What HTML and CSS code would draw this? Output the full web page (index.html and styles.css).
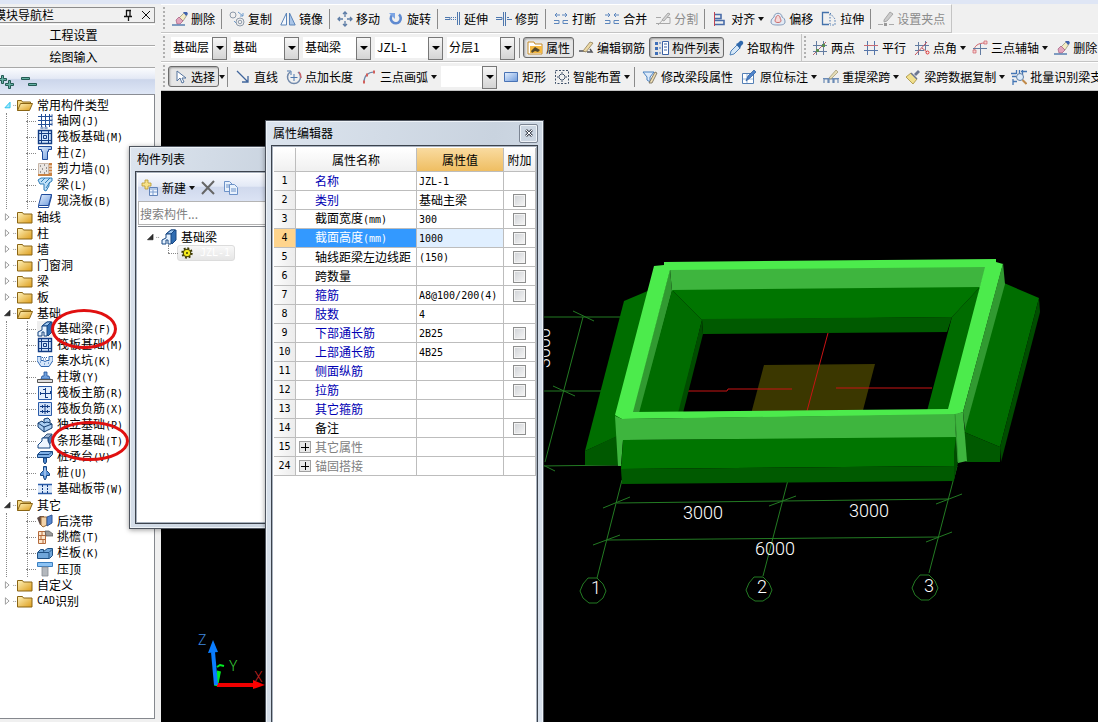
FILE: index.html
```html
<!doctype html>
<html lang="zh-CN">
    <head>
        <meta charset="UTF-8" />
        <meta name="viewport" content="width=device-width, initial-scale=1.0" />
        <title>绘图输入</title>
        <link rel="stylesheet" href="styles.css">
    </head>
    <body>
        <!-- Icon set -->
        <svg class="sprite" aria-hidden="true">
            <defs>
                <linearGradient id="gold" x1="0" y1="0" x2="1" y2="1">
                    <stop offset="0" stop-color="#fff3bd" />
                    <stop offset="1" stop-color="#dd9d1b" />
                </linearGradient>
                <linearGradient id="blue" x1="0" y1="0" x2="1" y2="1">
                    <stop offset="0" stop-color="#e6f1ff" />
                    <stop offset="1" stop-color="#6f9bdc" />
                </linearGradient>
            </defs>

            <!-- toolbar -->
            <symbol id="i-erase" viewBox="0 0 16 16">
                <path d="M7 7l5-5 3 2-4 6z" fill="#f3ecc4" stroke="#8c8a70" stroke-width=".7" />
                <path d="M11 1h4l1 2-2 2z" fill="#3f62ad" />
                <path d="M4 9l3-3 4 4-3 3H5z" fill="#e3a6bd" stroke="#a25a7e" stroke-width=".7" />
                <path d="M0 14h13" stroke="#587fb0" stroke-width="1.5" />
            </symbol>
            <symbol id="i-copy" viewBox="0 0 16 16" fill="none" stroke="#8e9aa9">
                <circle cx="4" cy="4" r="3" />
                <circle cx="11" cy="11" r="4" />
                <circle cx="11" cy="11" r="1.8" />
                <path d="M9 1l5 4m0-3v3h-3" stroke="#6f9ccd" />
                <path d="M5 10l2 2" stroke="#6f9ccd" />
            </symbol>
            <symbol id="i-mirror" viewBox="0 0 16 16" stroke="#5b84b8">
                <path d="M6.500 2v12H.8z" fill="#f4f8fd" />
                <path d="M9.500 2v12h5.700z" fill="#a9c5e8" />
            </symbol>
            <symbol id="i-move" viewBox="0 0 16 16" fill="none" stroke="#5e7da6" stroke-width="1.300">
                <path d="M8 1v5M8 10v5M1 8h5M10 8h5M6 3l2-2 2 2M6 13l2 2 2-2M3 6L1 8l2 2M13 6l2 2-2 2" />
            </symbol>
            <symbol id="i-rotate" viewBox="0 0 16 16">
                <path d="M4 4a5 5 0 1 0 7-.5" fill="none" stroke="#5f8ad0" stroke-width="2.600" />
                <path d="M1 2h6v6z" fill="#7da5e4" />
            </symbol>
            <symbol id="i-extend" viewBox="0 0 16 16" fill="none" stroke="#4f78ae">
                <path d="M0 6.500h5v2H0" />
                <path d="M6 6.500h5M6 8.500h5" stroke-dasharray="1 1" />
                <path d="M12.500 1v13M14.500 1v13" />
            </symbol>
            <symbol id="i-trim" viewBox="0 0 16 16" fill="none" stroke="#4f78ae">
                <path d="M0 6.500h6v2H0M7.500 1v14M9.500 1v14M11 6.500h2M11 8.500h5" />
            </symbol>
            <symbol id="i-break" viewBox="0 0 16 16" fill="none" stroke="#5c86bd">
                <path d="M7 4H2m2-2L2 4l2 2M9 4h5m-2-2l2 2-2 2" />
                <path d="M1 9.500h5v3H1M15 9.500h-5v3h5" />
            </symbol>
            <symbol id="i-merge" viewBox="0 0 16 16" fill="none" stroke="#5c86bd">
                <path d="M1 4h5M4 2l2 2-2 2M15 4h-5m2-2l-2 2 2 2" />
                <path d="M1 9.500h5v3H1M15 9.500h-5v3h5" />
            </symbol>
            <symbol id="i-split" viewBox="0 0 16 16" fill="none" stroke="#a8a8a8">
                <path d="M1 6.500h5M1 12.500h14v-6h-3M3 14L14 2" />
                <path d="M7 9l6-7 2 1-6 7z" fill="#d4d4d4" />
            </symbol>
            <symbol id="i-align" viewBox="0 0 16 16" fill="none">
                <path d="M2.500 1v14" stroke="#c04454" />
                <path d="M3 3.500h6v4H3M3 9.500h9v4H3" stroke="#4a6da9" stroke-width="1.600" />
            </symbol>
            <symbol id="i-offset" viewBox="0 0 16 16">
                <path d="M1 11c0-3 2-4 3-5 0-5 8-5 8 0 2 1 3 2 3 5 0 3-4 3-7 3s-7 0-7-3z" fill="#e3ebf5" stroke="#8098b8" />
                <path d="M5 10c0-2 1-2 1-4 1-2 3-2 4 0 0 2 1 2 1 4s-6 2-6 0z" fill="#f7d9d9" stroke="#ca6e6e" />
            </symbol>
            <symbol id="i-stretch" viewBox="0 0 16 16" fill="none" stroke="#4472ab">
                <path d="M8 1.500H1.500v12H8" stroke-width="1.300" />
                <path d="M9 2l5 6v6H9M9 3v10" stroke-dasharray="1.500 1.500" />
            </symbol>
            <symbol id="i-grip" viewBox="0 0 16 16">
                <path d="M6 9l6-8 3 2-6 7-3 1z" fill="#ccc" stroke="#999" stroke-width=".8" />
                <path d="M0 13.500h5M11 13.500h5" stroke="#aaa" />
                <path d="M6 12h3v3H6z" fill="#999" />
            </symbol>
            <symbol id="i-props" viewBox="0 0 16 16">
                <path d="M1 2h6l1 2h7v10H1z" fill="#fff" stroke="#c58c2a" />
                <path d="M3 6h12v7H3z" fill="#f4b842" />
                <path d="M4 11l4-4 5 3-2 2-3-1-3 2z" fill="#554a2d" />
            </symbol>
            <symbol id="i-editbar" viewBox="0 0 16 16">
                <path d="M1 11h7M9 12h5l-2-3" fill="none" stroke="#50535a" stroke-width="1.500" />
                <path d="M5 11l7-9 3 1-7 9z" fill="#ecd9a5" stroke="#927f59" stroke-width=".8" />
            </symbol>
            <symbol id="i-list" viewBox="0 0 16 16">
                <path d="M2 2h3v3H2zM2 7h3v3H2zM2 12h3v3H2z" fill="#3f6fb8" />
                <path d="M6 3h2M6 8h2M6 13h2" stroke="#3f6fb8" />
                <path d="M9.500 1.500h6v13h-6z" fill="#fff" stroke="#3d63a5" />
                <path d="M11 4h3M11 7h3M11 10h3" stroke="#3d63a5" />
            </symbol>
            <symbol id="i-pick" viewBox="0 0 16 16">
                <path d="M2 15l1-4 6-6 3 3-6 6z" fill="#d6e8f8" stroke="#5283b9" />
                <path d="M8 4l2-1 2-2c2-1 4 1 3 3l-2 2-1 3z" fill="#3069ac" />
            </symbol>
            <symbol id="i-twopt" viewBox="0 0 16 16" fill="none">
                <path d="M4.500 1v14M11.500 1v14M1 5.500h14M1 11.500h14" stroke="#637ca1" />
                <path d="M1 15L14 2" stroke="#b0666b" />
                <path d="M10 4h3v3h-3zM4 9h3v3H4z" fill="#5a8d50" />
            </symbol>
            <symbol id="i-parallel" viewBox="0 0 16 16" fill="none">
                <path d="M4.500 1v14M11.500 1v14" stroke="#5676aa" />
                <path d="M1 5.500h14" stroke="#c96c75" />
                <path d="M1 10.500h14" stroke="#5676aa" />
            </symbol>
            <symbol id="i-angle" viewBox="0 0 16 16" fill="none">
                <path d="M4.500 2v13M11.500 1v9M1 5.500h14M1 10.500h9" stroke="#637ca1" />
                <path d="M1 15L13 2M8 8l5 4" stroke="#c7525c" />
                <circle cx="13.500" cy="12.500" r="1.500" stroke="#d33" />
            </symbol>
            <symbol id="i-3axis" viewBox="0 0 16 16" fill="none">
                <path d="M2 11C2 6 6 3 13 3" stroke="#cf6068" />
                <path d="M1 8.500h14M8.500 4v11" stroke="#637ca1" />
                <path d="M12 1h3v3h-3zM1 10h3v3H1z" fill="#f5d0d0" stroke="#cf6068" stroke-width=".7" />
            </symbol>
            <symbol id="i-arrow" viewBox="0 0 16 16">
                <path d="M5 2v10l3-3 2 5 2-1-2-4h4z" fill="#fff" stroke="#54749f" />
            </symbol>
            <symbol id="i-line" viewBox="0 0 16 16">
                <path d="M2 2l11 11m0-6v6H7" fill="none" stroke="#40659c" stroke-width="1.300" />
            </symbol>
            <symbol id="i-ptlen" viewBox="0 0 16 16" fill="none">
                <path d="M4 3a6.500 6.500 0 1 0 8 0" stroke="#7088aa" stroke-width="1.500" />
                <path d="M1 2h4v4" stroke="#4f78ae" />
                <path d="M8 5v7M4.500 8.500h7" stroke="#4f78ae" />
                <path d="M13 3c2 2 2 4 2 6" stroke="#c9646b" stroke-width="1.500" />
            </symbol>
            <symbol id="i-arc" viewBox="0 0 16 16" fill="none">
                <path d="M3 13C3 7 7 3 13 3" stroke="#6c86a8" stroke-width="1.200" />
                <path d="M2 13h2M5 6h2M12 3h2" stroke="#d2605c" stroke-width="3" />
            </symbol>
            <symbol id="i-rect" viewBox="0 0 16 16">
                <path d="M1.500 3.500h13v9h-13z" fill="url(#blue)" stroke="#4973b5" />
            </symbol>
            <symbol id="i-smart" viewBox="0 0 16 16" fill="none" stroke="#3d4f68">
                <path d="M1.500 1.500h13v13h-13z" stroke-dasharray="2 1.500" />
                <path d="M8 3v3M8 10v3M3 8h3M10 8h3" />
                <path d="M6 5.500h4M6 10.500h4M5.500 6v4M10.500 6v4" stroke-dasharray="1 2" />
            </symbol>
            <symbol id="i-modify" viewBox="0 0 16 16">
                <path d="M1 3h11L8 8v5l-3-2V8z" fill="#dceafa" stroke="#4981c0" />
                <path d="M7 14l6-11 2 1-5 10z" fill="#f0dfb4" stroke="#6d6554" stroke-width=".8" />
            </symbol>
            <symbol id="i-note" viewBox="0 0 16 16">
                <path d="M1.500 4.500h11v10h-11z" fill="#fff" stroke="#5580b6" />
                <path d="M2 10h10M6 5v9" stroke="#9bb8dc" />
                <path d="M5 12l2-5 6-6 2 2-6 6z" fill="#4e83cb" stroke="#2a5b9d" stroke-width=".7" />
            </symbol>
            <symbol id="i-span" viewBox="0 0 16 16">
                <path d="M1 14v-4h4v4M6 14v-4h4v4M11 14v-4h4v4M0 9.500h16" fill="none" stroke="#6b8bb5" stroke-width="1.200" />
                <path d="M6 9l7-8 2 2-7 7z" fill="#e5dcb6" stroke="#9b936d" stroke-width=".7" />
            </symbol>
            <symbol id="i-brush" viewBox="0 0 16 16">
                <path d="M9 5l4-4 2 2-4 4z" fill="#6c7690" />
                <path d="M6 4l6 6-4 5-7-7z" fill="#f1df8d" stroke="#a48e3a" stroke-width=".8" />
                <path d="M6 4l6 6" stroke="#6c7690" stroke-width="1.500" />
            </symbol>
            <symbol id="i-batch" viewBox="0 0 16 16" fill="none">
                <path d="M0 4.500h5M1 7.500h4M2 12.500h4M5.500 1v4M8.500 1v4M11.500 1v5M10 2.500h6M2 10v6" stroke="#4476b5" stroke-width="1.300" />
                <circle cx="9" cy="8" r="3.500" fill="#dcebfa" stroke="#5d7ea6" />
                <path d="M11.500 11l4 4" stroke="#c08a4a" stroke-width="2" />
            </symbol>

            <!-- tree -->
            <symbol id="i-folder" viewBox="0 0 16 16">
                <path d="M.5 3.500h5l1 1.500h8.500v9H.5z" fill="url(#gold)" stroke="#8a6514" />
            </symbol>
            <symbol id="i-folder-open" viewBox="0 0 16 16">
                <path d="M.5 13.500v-10h4l1 1.500h8v3" fill="#f5d884" stroke="#8a6514" />
                <path d="M.5 13.500l3-7h12l-3 7z" fill="url(#gold)" stroke="#8a6514" />
            </symbol>
            <symbol id="i-open" viewBox="0 0 14 16">
                <path d="M6.500 5v6H.5z" fill="#333" stroke="#111" stroke-width=".6" />
                <path d="M10 8.500h4" stroke="#888" stroke-dasharray="1 1" />
            </symbol>
            <symbol id="i-open-hot" viewBox="0 0 14 16">
                <path d="M6.500 5v6H1z" fill="#a5e6fb" stroke="#1fc0ee" />
                <path d="M10 8.500h4" stroke="#888" stroke-dasharray="1 1" />
            </symbol>
            <symbol id="i-closed" viewBox="0 0 14 16">
                <path d="M1.500 4.500v7l4-3.500z" fill="#fff" stroke="#989898" />
                <path d="M10 8.500h4" stroke="#888" stroke-dasharray="1 1" />
            </symbol>
            <symbol id="t-grid" viewBox="0 0 16 16" fill="none" stroke="#234f97">
                <path d="M4.500 1v13M8.500 1v13M12.500 1v13M1 3.500h14M1 7.500h14M1 11.500h14" />
                <path d="M14 2h2v2h-2zM14 6h2v2h-2zM14 10h2v2h-2zM4 14h2v2H4zM8 14h2v2H8z" stroke-width=".6" />
            </symbol>
            <symbol id="t-raft" viewBox="0 0 16 16" fill="none" stroke="#123c84">
                <path d="M1.500 1.500h13v13h-13z" fill="#cfe3fb" stroke-width="1.400" />
                <path d="M4.500 2v12M11.500 2v12M2 4.500h12M2 11.500h12M6.500 6.500h3v3h-3z" />
            </symbol>
            <symbol id="t-column" viewBox="0 0 16 16">
                <path d="M1.500 1.500h13v3h-3v2h-1v8h-5v-8h-1v-2h-3z" fill="url(#blue)" stroke="#1f4b9c" />
            </symbol>
            <symbol id="t-wall" viewBox="0 0 16 16">
                <path d="M1.500 2.500h10v12h-10z" fill="#eae6e2" stroke="#c9b7a8" />
                <path d="M3 5h1M7 4h1M5 8h1M9 7h1M3 11h1M7 12h1M9 10h1" stroke="#444" />
                <path d="M12 2h3v13h-3zM1 13h11v2H1z" fill="#c98242" />
                <path d="M12 5h3M12 8h3M12 11h3" stroke="#fff" />
            </symbol>
            <symbol id="t-beam" viewBox="0 0 16 16">
                <path d="M1 3l3-2h11v3l-3 2v3l-3 5-2-1V7H3z" fill="#bfe0f8" stroke="#2e7db8" />
                <path d="M4 5l4-4M8 6l5-5M9 11l4-6" stroke="#2e7db8" />
            </symbol>
            <symbol id="t-slab" viewBox="0 0 16 16">
                <path d="M4.500 1.500h10l-3 11h-10z" fill="url(#blue)" stroke="#1f4b9c" />
                <path d="M1.500 12.500v2h10l3-11v-2" fill="none" stroke="#1f4b9c" />
            </symbol>
            <symbol id="t-fbeam" viewBox="0 0 16 16">
                <path d="M5 5l5-4h5v10l-4 4z" fill="#2f6cb1" stroke="#174682" />
                <path d="M5 5l5-4h4l-4 4z" fill="#9cc6ef" stroke="#174682" />
                <path d="M1 15v-4l4-2V5h5v10H7v-4H5v4z" fill="#e4f1fe" stroke="#174682" />
            </symbol>
            <symbol id="t-sump" viewBox="0 0 16 16">
                <path d="M0 3.500h4v4h2l2 1 2-1h2v-4h4v4l-4 6H4l-4-6z" fill="#d5e6fa" stroke="#2e66b0" />
                <path d="M5 4.500h6M6 6h4M3 9h1M7 11h1M11 10h1" stroke="#2e66b0" stroke-dasharray="1 1" />
            </symbol>
            <symbol id="t-pier" viewBox="0 0 16 16">
                <path d="M7 3h3v4h2l1 3H4l1-3h2z" fill="#6f9fdb" stroke="#20509b" stroke-width=".8" />
                <path d="M.5 10.500h15v3H.5z" fill="#ddd" stroke="#555" />
            </symbol>
            <symbol id="t-main" viewBox="0 0 16 16" fill="none" stroke="#2a5ba8">
                <path d="M1.500 1.500h13v13h-13z" fill="#e3effc" />
                <path d="M8.500 3v10M3 8.500h10M6 4.500h2M9 12.500h2M3.500 7v3M13.500 6v3" stroke="#123c84" />
            </symbol>
            <symbol id="t-neg" viewBox="0 0 16 16" fill="none" stroke="#2a5ba8">
                <path d="M1.500 1.500h13v13h-13z" fill="#cfe0f7" />
                <path d="M8 3v10M3 5.500h10M3 10.500h10M5.500 4v3M10.500 4v3M5.500 9v3M10.500 9v3" stroke="#123c84" />
            </symbol>
            <symbol id="t-single" viewBox="0 0 16 16">
                <path d="M1 6l4-2 2 2V2l4-1 2 2v3l2 1v4l-8 4-6-5z" fill="#a9cdf1" stroke="#123c70" />
                <path d="M1 6l6 4 8-3M7 10v5M7 6l3-1 3 1" fill="none" stroke="#123c70" />
            </symbol>
            <symbol id="t-strip" viewBox="0 0 16 16">
                <path d="M6 5l4-4h5l-4 4z" fill="#9fb7d4" stroke="#35557d" />
                <path d="M11 5l4-4v7l-3 4z" fill="#4f7cb4" stroke="#35557d" />
                <path d="M1 15v-3l4-4V5h6v3l2 4v3z" fill="#eef6ff" stroke="#174682" />
            </symbol>
            <symbol id="t-cap" viewBox="0 0 16 16">
                <path d="M.5 5.500l3-3h12v3l-3 3H.5z" fill="#7fb0e6" stroke="#174682" />
                <path d="M1 5.500h11l3-3" fill="none" stroke="#174682" />
                <path d="M6.500 9h3v4l-1.500 2-1.500-2z" fill="#4a86cd" stroke="#174682" />
            </symbol>
            <symbol id="t-pile" viewBox="0 0 16 16">
                <path d="M6.500 1.500h3v4l3 3v2h-3v2L8 15l-1.500-2.500v-2h-3v-2l3-3z" fill="#5b93d8" stroke="#174682" />
                <path d="M8 3v8" stroke="#dbeaff" />
            </symbol>
            <symbol id="t-band" viewBox="0 0 16 16">
                <path d="M1 3h14v10H1z" fill="#dbe9fb" />
                <path d="M1 3.500h14M1 12.500h14" stroke="#2a5ba8" stroke-width="1.500" />
                <path d="M5.500 4v8M10.500 4v8" stroke="#123c84" stroke-dasharray="2 1" />
            </symbol>
            <symbol id="t-cast" viewBox="0 0 16 16">
                <path d="M0 5l3-2h4v9H3z" fill="#5f4b45" />
                <path d="M4 4h6v8l-4 2-2-2z" fill="#f3d3a9" stroke="#9b6b36" />
                <path d="M10 4l5-2v8l-5 3z" fill="#5586cf" stroke="#2c5495" />
            </symbol>
            <symbol id="t-eave" viewBox="0 0 16 16">
                <path d="M1.500 2.500h7v12h-7z" fill="#fce7ce" stroke="#b46a3c" />
                <path d="M2 6.500h6M2 10.500h6M5 3v3M4 7v3M6 11v3" stroke="#b46a3c" />
                <path d="M8 2h4l4 3v2H9z" fill="#9a9a9a" stroke="#555" stroke-width=".7" />
            </symbol>
            <symbol id="t-rail" viewBox="0 0 16 16">
                <path d="M.5 7.500l3-3h3v2l4-3h5v7l-3 3H.5z" fill="#6fa6da" stroke="#1d5084" />
                <path d="M1 7.500h11l3-3M12 8v5" fill="none" stroke="#1d5084" />
            </symbol>
            <symbol id="t-coping" viewBox="0 0 16 16">
                <path d="M.5 1.500h15v4H.5z" fill="#8cc3f4" stroke="#3a7fc0" />
                <path d="M5 6h6v9H5z" fill="#b4b8bd" stroke="#868b92" stroke-width=".8" />
            </symbol>
            <symbol id="i-new" viewBox="0 0 18 18">
                <path d="M4 1h3v3h3v3H7v3H4V7H1V4h3z" fill="#f7e28a" stroke="#b7972b" stroke-width=".8" />
                <path d="M8.500 8.500h8v8h-8z" fill="#eef4fd" stroke="#6284b9" />
                <path d="M9 10h7M9 13h7M12 11v5" stroke="#7b9dd0" />
            </symbol>
            <symbol id="i-docs" viewBox="0 0 16 16" fill="#e8f1fc" stroke="#6d92c8">
                <path d="M1.500 1.500h5l3 3v7h-8z" />
                <path d="M6.500 4.500h5l3 3v7h-8z" />
                <path d="M3 5h3M3 7h3M8 9h5M8 11h5" />
            </symbol>
            <symbol id="i-gear" viewBox="0 0 12 12">
                <circle cx="6" cy="6" r="4.500" fill="none" stroke="#3b3800" stroke-width="2.400" stroke-dasharray="1.800 1.700" />
                <circle cx="6" cy="6" r="3.800" fill="#f4ea1c" stroke="#3b3800" />
                <circle cx="6" cy="6" r="1" fill="#3b3800" />
            </symbol>
        </svg>

        <div class="app">
            <aside class="sidebar">
                <header class="nav-title">
                    <span>模块导航栏</span>
                    <svg class="nav-tools" viewBox="0 0 28 12" fill="none" stroke="#111">
                        <path d="M3 1.500h5M3.500 1v6M7 1v6M1 7.500h8M5.500 8v4" stroke-width="1.300" />
                        <path d="M19 2l8 8M27 2l-8 8" />
                    </svg>
                </header>
                <button class="nav-tab">工程设置</button>
                <button class="nav-tab">绘图输入</button>
                <div class="nav-bar">
                    <svg viewBox="0 0 38 16" fill="#65b0a3" stroke="#245b54">
                        <path d="M1.500 .5h2v3h3v2h-3v3h-2v-3h-3v-2h3zM8.500 5.500h2v3h3v2h-3v3h-2v-3h-3v-2h3z" />
                        <path d="M21.500 2.500h8v2h-8zM28.500 8.500h8v2h-8z" />
                    </svg>
                </div>

                <ul class="tree">
                    <li>
                        <div class="node"><svg class="twist"><use href="#i-open-hot" /></svg><svg class="icon"><use href="#i-folder-open" /></svg>常用构件类型</div>
                        <ul>
                            <li><svg class="icon"><use href="#t-grid" /></svg><span>轴网<kbd>(J)</kbd></span></li>
                            <li><svg class="icon"><use href="#t-raft" /></svg><span>筏板基础<kbd>(M)</kbd></span></li>
                            <li><svg class="icon"><use href="#t-column" /></svg><span>柱<kbd>(Z)</kbd></span></li>
                            <li><svg class="icon"><use href="#t-wall" /></svg><span>剪力墙<kbd>(Q)</kbd></span></li>
                            <li><svg class="icon"><use href="#t-beam" /></svg><span>梁<kbd>(L)</kbd></span></li>
                            <li><svg class="icon"><use href="#t-slab" /></svg><span>现浇板<kbd>(B)</kbd></span></li>
                        </ul>
                    </li>
                    <li><div class="node"><svg class="twist"><use href="#i-closed" /></svg><svg class="icon"><use href="#i-folder" /></svg>轴线</div></li>
                    <li><div class="node"><svg class="twist"><use href="#i-closed" /></svg><svg class="icon"><use href="#i-folder" /></svg>柱</div></li>
                    <li><div class="node"><svg class="twist"><use href="#i-closed" /></svg><svg class="icon"><use href="#i-folder" /></svg>墙</div></li>
                    <li><div class="node"><svg class="twist"><use href="#i-closed" /></svg><svg class="icon"><use href="#i-folder" /></svg>门窗洞</div></li>
                    <li><div class="node"><svg class="twist"><use href="#i-closed" /></svg><svg class="icon"><use href="#i-folder" /></svg>梁</div></li>
                    <li><div class="node"><svg class="twist"><use href="#i-closed" /></svg><svg class="icon"><use href="#i-folder" /></svg>板</div></li>
                    <li>
                        <div class="node"><svg class="twist"><use href="#i-open" /></svg><svg class="icon"><use href="#i-folder-open" /></svg>基础</div>
                        <ul>
                            <li class="current"><svg class="icon"><use href="#t-fbeam" /></svg><span class="circled">基础梁<kbd>(F)</kbd></span></li>
                            <li><svg class="icon"><use href="#t-raft" /></svg><span>筏板基础<kbd>(M)</kbd></span></li>
                            <li><svg class="icon"><use href="#t-sump" /></svg><span>集水坑<kbd>(K)</kbd></span></li>
                            <li><svg class="icon"><use href="#t-pier" /></svg><span>柱墩<kbd>(Y)</kbd></span></li>
                            <li><svg class="icon"><use href="#t-main" /></svg><span>筏板主筋<kbd>(R)</kbd></span></li>
                            <li><svg class="icon"><use href="#t-neg" /></svg><span>筏板负筋<kbd>(X)</kbd></span></li>
                            <li><svg class="icon"><use href="#t-single" /></svg><span>独立基础<kbd>(P)</kbd></span></li>
                            <li><svg class="icon"><use href="#t-strip" /></svg><span class="circled">条形基础<kbd>(T)</kbd></span></li>
                            <li><svg class="icon"><use href="#t-cap" /></svg><span>桩承台<kbd>(V)</kbd></span></li>
                            <li><svg class="icon"><use href="#t-pile" /></svg><span>桩<kbd>(U)</kbd></span></li>
                            <li><svg class="icon"><use href="#t-band" /></svg><span>基础板带<kbd>(W)</kbd></span></li>
                        </ul>
                    </li>
                    <li>
                        <div class="node"><svg class="twist"><use href="#i-open" /></svg><svg class="icon"><use href="#i-folder-open" /></svg>其它</div>
                        <ul>
                            <li><svg class="icon"><use href="#t-cast" /></svg><span>后浇带</span></li>
                            <li><svg class="icon"><use href="#t-eave" /></svg><span>挑檐<kbd>(T)</kbd></span></li>
                            <li><svg class="icon"><use href="#t-rail" /></svg><span>栏板<kbd>(K)</kbd></span></li>
                            <li><svg class="icon"><use href="#t-coping" /></svg><span>压顶</span></li>
                        </ul>
                    </li>
                    <li><div class="node"><svg class="twist"><use href="#i-closed" /></svg><svg class="icon"><use href="#i-folder" /></svg>自定义</div></li>
                    <li><div class="node"><svg class="twist"><use href="#i-closed" /></svg><svg class="icon"><use href="#i-folder" /></svg><kbd>CAD</kbd>识别</div></li>
                </ul>
            </aside>

            <main class="workspace">
                <div class="toolbar short">
                    <button class="tool"><svg class="icon"><use href="#i-erase" /></svg>删除</button>
                    <i class="sep"></i>
                    <button class="tool"><svg class="icon"><use href="#i-copy" /></svg>复制</button>
                    <button class="tool"><svg class="icon"><use href="#i-mirror" /></svg>镜像</button>
                    <i class="sep"></i>
                    <button class="tool"><svg class="icon"><use href="#i-move" /></svg>移动</button>
                    <button class="tool"><svg class="icon"><use href="#i-rotate" /></svg>旋转</button>
                    <i class="sep"></i>
                    <button class="tool"><svg class="icon"><use href="#i-extend" /></svg>延伸</button>
                    <button class="tool"><svg class="icon"><use href="#i-trim" /></svg>修剪</button>
                    <i class="sep"></i>
                    <button class="tool"><svg class="icon"><use href="#i-break" /></svg>打断</button>
                    <button class="tool"><svg class="icon"><use href="#i-merge" /></svg>合并</button>
                    <button class="tool" disabled><svg class="icon"><use href="#i-split" /></svg>分割</button>
                    <i class="sep"></i>
                    <button class="tool drop"><svg class="icon"><use href="#i-align" /></svg>对齐</button>
                    <button class="tool"><svg class="icon"><use href="#i-offset" /></svg>偏移</button>
                    <button class="tool"><svg class="icon"><use href="#i-stretch" /></svg>拉伸</button>
                    <i class="sep"></i>
                    <button class="tool" disabled><svg class="icon"><use href="#i-grip" /></svg>设置夹点</button>
                </div>

                <div class="toolbar">
                    <div class="combos">
                        <span class="combo narrow"><select aria-label="楼层"><option>基础层</option></select></span>
                        <span class="combo"><select aria-label="构件类别"><option>基础</option></select></span>
                        <span class="combo"><select aria-label="构件类型"><option>基础梁</option></select></span>
                        <span class="combo"><select aria-label="构件"><option>JZL-1</option></select></span>
                        <span class="combo"><select aria-label="分层"><option>分层1</option></select></span>
                    </div>
                    <i class="sep"></i>
                    <button class="tool pressed"><svg class="icon"><use href="#i-props" /></svg>属性</button>
                    <button class="tool"><svg class="icon"><use href="#i-editbar" /></svg>编辑钢筋</button>
                    <button class="tool pressed"><svg class="icon"><use href="#i-list" /></svg>构件列表</button>
                    <button class="tool"><svg class="icon"><use href="#i-pick" /></svg>拾取构件</button>
                    <i class="grip"></i>
                    <button class="tool"><svg class="icon"><use href="#i-twopt" /></svg>两点</button>
                    <button class="tool"><svg class="icon"><use href="#i-parallel" /></svg>平行</button>
                    <button class="tool drop"><svg class="icon"><use href="#i-angle" /></svg>点角</button>
                    <button class="tool drop"><svg class="icon"><use href="#i-3axis" /></svg>三点辅轴</button>
                    <button class="tool"><svg class="icon"><use href="#i-erase" /></svg>删除</button>
                </div>

                <div class="toolbar">
                    <button class="tool pressed"><svg class="icon"><use href="#i-arrow" /></svg>选择</button>
                    <i class="caret"></i>
                    <i class="sep"></i>
                    <button class="tool"><svg class="icon"><use href="#i-line" /></svg>直线</button>
                    <button class="tool"><svg class="icon"><use href="#i-ptlen" /></svg>点加长度</button>
                    <button class="tool drop"><svg class="icon"><use href="#i-arc" /></svg>三点画弧</button>
                    <span class="combo narrow"><select aria-label="画弧方式"><option></option></select></span>
                    <button class="tool"><svg class="icon"><use href="#i-rect" /></svg>矩形</button>
                    <button class="tool drop"><svg class="icon"><use href="#i-smart" /></svg>智能布置</button>
                    <i class="sep"></i>
                    <button class="tool"><svg class="icon"><use href="#i-modify" /></svg>修改梁段属性</button>
                    <button class="tool drop"><svg class="icon"><use href="#i-note" /></svg>原位标注</button>
                    <button class="tool drop"><svg class="icon"><use href="#i-span" /></svg>重提梁跨</button>
                    <button class="tool drop"><svg class="icon"><use href="#i-brush" /></svg>梁跨数据复制</button>
                    <button class="tool"><svg class="icon"><use href="#i-batch" /></svg>批量识别梁支</button>
                </div>

                <!-- 3D view of the foundation beams -->
                <svg class="view" viewBox="161 91 937 631" preserveAspectRatio="xMidYMid slice">
                    <g class="axis-lines">
                        <path d="M540 317H622M540 391H602M540 466L622 465" />
                        <path d="M583 317L545 462M573 311l21 10M553 386l22 10M543 465l12 6" />
                        <path d="M622 480L597 578M788 480L763 576M957 466L929 573" />
                        <path d="M617 503L949 499M607 540L939 537" />
                        <path d="M603 508l27-11M769 506l27-10M936 504l26-10M593 545l27-10M926 542l26-10" />
                        <path d="M588 578h9l6 6 3 7-3 7-6 5h-8l-6-5-3-7 3-7zM754 577h9l6 6 3 7-3 7-6 4h-8l-6-4-3-7 3-7zM920 575h9l6 6 3 7-3 7-6 5h-8l-6-5-3-7 3-7z" />
                    </g>

                    <path d="M764 365L875 364 862 414H751z" fill="#3b3700" />
                    <path class="red" d="M688 391h39l1-2h64M836 388h96M828 333L807 411" />

                    <!-- outer slopes -->
                    <path d="M624 301L650 290 618 436 585 451z" fill="#006e00" />
                    <path d="M585 451L617 436 620 465H585z" fill="#005900" />
                    <path d="M1004 283L1039 298 1000 447 964 432z" fill="#006e00" />
                    <path d="M1039 298L1040 312 1001 462 1000 447z" fill="#004c00" />
                    <path d="M964 432L1000 447V462H966z" fill="#005900" />

                    <!-- inner faces -->
                    <path d="M670 269L986 266 980 288 672 291z" fill="#3eb53e" />
                    <path d="M670 269L672 291 640 413H632z" fill="#319a31" />
                    <path d="M672 290L980 287 952 317 702 320z" fill="#007500" />
                    <path d="M672 290L702 320 679 413H639z" fill="#006c00" />
                    <path d="M702 319L952 317 947 332 703 334z" fill="#005a00" />
                    <path d="M702 320L703 334 683 413H678z" fill="#004c00" />
                    <path d="M980 287L952 317 927 411H950z" fill="#006c00" />

                    <!-- top ring -->
                    <path d="M654 266L664 265V262L996 259V262L1003 264 963 412 955 415 622 419 615 415zM670 270L633 412 948 409 985 267z" fill="#4ceb4c" fill-rule="evenodd" />

                    <!-- front -->
                    <path d="M1003 263L1005 284 965 430 963 412z" fill="#319a31" />
                    <path d="M615 416L622 419 955 414 956 438 623 440 621 466H618z" fill="#3eb53e" />
                    <path d="M623 440L956 437V466L621 469z" fill="#007500" />
                    <path d="M621 469L955 466 954 481 622 484z" fill="#005a00" />
                    <path d="M956 437L958 463 954 480V452z" fill="#004c00" />
                    <path d="M955 414L963 412 967 461 958 463z" fill="#3eb53e" />
                    <path d="M955 414L958 462" stroke="#319a31" />

                    <g class="dims">
                        <text x="683" y="519">3000</text>
                        <text x="849" y="517">3000</text>
                        <text x="755" y="555">6000</text>
                        <text x="591" y="594">1</text>
                        <text x="757" y="593">2</text>
                        <text x="924" y="592">3</text>
                        <text transform="translate(550 368) rotate(-90)">3000</text>
                    </g>

                    <!-- coordinate axes -->
                    <path d="M216 686L219 671" stroke="#00ec22" stroke-width="4" />
                    <path d="M217 667l3-2 4 1" fill="none" stroke="#00ec22" stroke-width="2" />
                    <path d="M217 685h37" stroke="#f00000" stroke-width="4" />
                    <path d="M253 680l12 5-12 4z" fill="#f00" />
                    <path d="M216 685L213 652" stroke="#0a7dff" stroke-width="4" />
                    <path d="M208 653l5-13 5 12z" fill="#0a7dff" />
                    <g class="axes">
                        <text x="198" y="645" fill="#3f86dc">Z</text>
                        <text x="229" y="671" fill="#39d339">Y</text>
                        <text x="254" y="682" fill="#c32222">X</text>
                    </g>
                </svg>
            </main>

            <section class="window list-window">
                <header class="window-title"><h2>构件列表</h2></header>
                <div class="window-body">
                    <div class="list-bar">
                        <button class="tool drop"><svg class="icon-new"><use href="#i-new" /></svg>新建</button>
                        <button class="tool" aria-label="删除"><svg class="icon" viewBox="0 0 16 16"><path d="M2 2l12 12M14 1L2 14" stroke="#666" stroke-width="2" /></svg></button>
                        <button class="tool" aria-label="复制"><svg class="icon"><use href="#i-docs" /></svg></button>
                    </div>
                    <input class="search" type="text" placeholder="搜索构件..." aria-label="搜索构件" />
                    <ul class="tree parts">
                        <li>
                            <div class="node"><svg class="twist"><use href="#i-open" /></svg><svg class="icon"><use href="#t-fbeam" /></svg>基础梁</div>
                            <ul>
                                <li><span class="part"><svg class="gear"><use href="#i-gear" /></svg><kbd>JZL-1</kbd></span></li>
                            </ul>
                        </li>
                    </ul>
                </div>
            </section>

            <section class="window props-window">
                <header class="window-title">
                    <h2>属性编辑器</h2>
                    <button class="close" aria-label="关闭">
                        <svg viewBox="0 0 8 8"><path d="M1 1l6 6M7 1L1 7" stroke="#444a57" stroke-width="2.600" /><path d="M1 1l6 6M7 1L1 7" stroke="#fff" /></svg>
                    </button>
                </header>
                <div class="window-body">
                    <table class="props">
                        <thead>
                            <tr><th class="num"></th><th class="name">属性名称</th><th class="value">属性值</th><th class="extra">附加</th></tr>
                        </thead>
                        <tbody>
                            <tr><th>1</th><td class="link">名称</td><td><kbd>JZL-1</kbd></td><td></td></tr>
                            <tr><th>2</th><td class="link">类别</td><td>基础主梁</td><td><input type="checkbox" aria-label="类别" /></td></tr>
                            <tr><th>3</th><td>截面宽度<kbd>(mm)</kbd></td><td><kbd>300</kbd></td><td><input type="checkbox" aria-label="截面宽度" /></td></tr>
                            <tr class="selected"><th>4</th><td>截面高度<kbd>(mm)</kbd></td><td><kbd>1000</kbd></td><td><input type="checkbox" aria-label="截面高度" /></td></tr>
                            <tr><th>5</th><td>轴线距梁左边线距</td><td><kbd>(150)</kbd></td><td><input type="checkbox" aria-label="轴线距梁左边线距" /></td></tr>
                            <tr><th>6</th><td>跨数量</td><td></td><td><input type="checkbox" aria-label="跨数量" /></td></tr>
                            <tr><th>7</th><td class="link">箍筋</td><td><kbd>A8@100/200(4)</kbd></td><td><input type="checkbox" aria-label="箍筋" /></td></tr>
                            <tr><th>8</th><td class="link">肢数</td><td><kbd>4</kbd></td><td></td></tr>
                            <tr><th>9</th><td class="link">下部通长筋</td><td><kbd>2B25</kbd></td><td><input type="checkbox" aria-label="下部通长筋" /></td></tr>
                            <tr><th>10</th><td class="link">上部通长筋</td><td><kbd>4B25</kbd></td><td><input type="checkbox" aria-label="上部通长筋" /></td></tr>
                            <tr><th>11</th><td class="link">侧面纵筋</td><td></td><td><input type="checkbox" aria-label="侧面纵筋" /></td></tr>
                            <tr><th>12</th><td class="link">拉筋</td><td></td><td><input type="checkbox" aria-label="拉筋" /></td></tr>
                            <tr><th>13</th><td class="link">其它箍筋</td><td></td><td></td></tr>
                            <tr><th>14</th><td>备注</td><td></td><td><input type="checkbox" aria-label="备注" /></td></tr>
                            <tr class="group"><th>15</th><td><button class="expand" aria-label="展开"></button>其它属性</td><td></td><td></td></tr>
                            <tr class="group"><th>24</th><td><button class="expand" aria-label="展开"></button>锚固搭接</td><td></td><td></td></tr>
                        </tbody>
                    </table>
                </div>
            </section>
        </div>
    </body>
</html>
```

FILE: styles.css
```css
* {
    margin: 0;
    padding: 0;
    box-sizing: border-box;
}

body {
    font-family: 'Noto Sans CJK SC', sans-serif;
    font-size: 12px;
    line-height: 16px;
    color: #000;
    background: #f0f0f0;
    overflow: hidden;
}

button,
input,
select {
    font: inherit;
    color: inherit;
    border: none;
    background: none;
}

ul {
    list-style: none;
}

kbd {
    font-family: 'DejaVu Sans Mono', monospace;
    font-size: 10px;
}

.sprite {
    position: absolute;
    width: 0;
    height: 0;
}

.icon {
    width: 16px;
    height: 16px;
    flex: none;
}

.app {
    position: relative;
    display: grid;
    grid-template-columns: 155px 1fr;
    column-gap: 6px;
    height: 100vh;
    border-top: 4px solid #dfe6f5;
    overflow: hidden;
}

/* Navigation panel */
.sidebar {
    display: flex;
    flex-direction: column;
    min-height: 0;
    padding: 3px 0 3px;
}

.nav-title {
    display: flex;
    justify-content: space-between;
    align-items: center;
    height: 16px;
    margin-bottom: 1px;
    padding-right: 3px;
    border: 1px solid #8c8c8c;
    border-left: none;
    white-space: nowrap;
}

.nav-title span {
    margin-left: -6px;
}

.nav-tools {
    width: 28px;
    height: 12px;
}

.nav-tab {
    height: 22px;
    padding-right: 8px;
    border-top: 1px solid #fff;
    border-bottom: 1px solid #a8a8a8;
    line-height: 20px;
}

.nav-bar {
    height: 27px;
    padding-top: 7px;
    background: linear-gradient(#fbfcfe, #e4e9f5 40%, #ccd6eb 45%, #dfe7f6);
    border-bottom: 1px solid #8a8d94;
}

.nav-bar svg {
    display: block;
    width: 38px;
    height: 16px;
}

.tree {
    flex: 1;
    padding-top: 2px;
    background: #fff;
    border-right: 1px solid #85888e;
    border-bottom: 1px solid #85888e;
    white-space: nowrap;
}

.node {
    display: flex;
    align-items: center;
    height: 16px;
    padding-left: 4px;
}

.node .icon {
    margin-right: 4px;
}

.twist {
    width: 13px;
    height: 16px;
}

.tree li {
    position: relative;
}

.tree ul li {
    display: flex;
    align-items: center;
    gap: 4px;
    height: 16px;
    padding-left: 37px;
}

.tree ul li::before {
    content: '';
    position: absolute;
    left: 26px;
    top: 8px;
    width: 10px;
    border-top: 1px dotted #888;
}

/* dotted guides */
.tree ul {
    position: relative;
}

.tree ul::before {
    content: '';
    position: absolute;
    left: 6px;
    top: 0;
    bottom: 0;
    width: 20px;
    border-left: 1px dotted #888;
    border-right: 1px dotted #888;
}

.current .icon {
    background: #eee;
}

.circled {
    position: relative;
}

.circled::after {
    content: '';
    position: absolute;
    inset: -11px -6px;
    border: 3px solid #e01010;
    border-radius: 50%;
    z-index: 1;
}

/* Toolbars */
.workspace {
    display: flex;
    flex-direction: column;
    min-width: 0;
    min-height: 0;
}

.toolbar {
    display: flex;
    align-items: center;
    flex: none;
    height: 29px;
    padding-left: 7px;
    border-top: 1px solid #fff;
    border-bottom: 1px solid #c4c4c4;
    position: relative;
    white-space: nowrap;
    overflow: hidden;
}

.toolbar.short {
    align-self: flex-start;
    padding-right: 2px;
    border-right: 1px solid #c4c4c4;
}

.toolbar::before,
.grip::before {
    content: '';
    position: absolute;
    left: 2px;
    top: 2px;
    bottom: 3px;
    border-left: 2px dotted #b0b0b0;
}

.tool {
    display: flex;
    align-items: center;
    flex: none;
    gap: 3px;
    height: 21px;
    padding: 0 4px;
}

.tool:disabled {
    color: #8c8c8c;
}

.tool.pressed {
    border: 1px solid #6b6b6b;
    border-radius: 3px;
    background: #e6e6e6;
    box-shadow: inset 1px 1px 2px #a0a0a0;
    padding: 0 3px;
}

.tool.drop {
    padding-right: 2px;
}

.tool.drop::after,
.caret {
    content: '';
    border: 3px solid transparent;
    border-top: 4px solid #111;
    border-bottom: none;
}

.sep {
    flex: none;
    width: 1px;
    height: 20px;
    margin: 0 3px 0 2px;
    background: #8a8a8a;
}

.grip {
    position: relative;
    flex: none;
    width: 7px;
    height: 27px;
    margin-left: 2px;
    border-left: 1px solid #c4c4c4;
}

.combos {
    display: flex;
    gap: 4px;
    margin: 0 2px 0 3px;
}

.combo {
    position: relative;
    flex: none;
    width: 68px;
    height: 21px;
    background: #fff;
}

.combo.narrow {
    width: 56px;
}

.combo select {
    display: block;
    width: 100%;
    height: 19px;
    padding-left: 2px;
    appearance: none;
    outline: none;
}

.combo::before {
    content: '';
    position: absolute;
    right: 0;
    top: 0;
    width: 13px;
    height: 21px;
    border: 1px solid #777;
    background: linear-gradient(#f6f6f6, #d4d4d4);
}

.combo::after {
    content: '';
    position: absolute;
    right: 3px;
    top: 9px;
    border: 4px solid transparent;
    border-top-color: #000;
    border-bottom: none;
    pointer-events: none;
}

.toolbar > .combo {
    margin: 0 2px;
}

/* 3D view */
.view {
    display: block;
    flex: 1;
    width: 100%;
    min-height: 0;
    background: #000;
}

.axis-lines {
    fill: none;
    stroke: #237a23;
}

.red {
    fill: none;
    stroke: #c81414;
}

.dims {
    font-family: Roboto, sans-serif;
    font-size: 18px;
    font-weight: 300;
    fill: #fff;
}

.axes {
    font-family: Roboto, sans-serif;
    font-size: 14px;
    font-weight: 300;
}

/* Floating windows */
.window {
    position: absolute;
    display: flex;
    flex-direction: column;
    padding: 0 5px 4px;
    border: 1px solid #4e545e;
    background: linear-gradient(100deg, #dce4ee, #c9d3df 60%, #d8e1ec);
    box-shadow: inset 0 0 0 1px #eef3f8, 0 1px 5px rgba(0, 0, 0, 0.4);
}

.list-window {
    left: 129px;
    top: 142px;
    width: 200px;
    height: 383px;
}

.props-window {
    left: 265px;
    top: 116px;
    bottom: -8px;
    width: 279px;
}

.window-title {
    display: flex;
    justify-content: space-between;
    align-items: center;
    height: 24px;
    padding: 0 0 0 2px;
    flex: none;
}

.window-title h2 {
    font-size: 12px;
    font-weight: 400;
}

.close {
    display: flex;
    align-items: center;
    justify-content: center;
    width: 19px;
    height: 19px;
    border: 1px solid #7b8492;
    border-radius: 2px;
    box-shadow: inset 0 0 0 1px #eef2f7;
}

.close svg {
    width: 8px;
    height: 8px;
}

.window-body {
    display: flex;
    flex-direction: column;
    flex: 1;
    border: 1px solid #3c434d;
    outline: 1px solid #a9b2be;
    outline-offset: -2px;
    background: #fff;
    padding: 2px;
}

.list-bar {
    display: flex;
    align-items: center;
    height: 27px;
    background: linear-gradient(#f7f9fd, #e3e9f6 45%, #d0d9ed 50%, #dbe3f4);
}

.list-bar .tool {
    padding-left: 3px;
}

.icon-new {
    width: 18px;
    height: 18px;
}

.search {
    height: 24px;
    padding: 0 1px;
    border: 1px solid #b4b4b4;
}

.search::placeholder {
    color: #808080;
    opacity: 1;
}

.parts {
    margin-top: 1px;
    border: none;
    border-top: 1px solid #85888e;
}

.parts .node {
    padding-left: 9px;
}

.parts .node .twist {
    margin-right: 1px;
}

.parts ul li {
    padding-left: 39px;
}

.parts ul li::before {
    left: 30px;
}

.parts ul::before {
    left: 30px;
    width: 1px;
    bottom: 8px;
    border-right: none;
}

.part {
    display: flex;
    align-items: center;
    gap: 7px;
    height: 16px;
    padding: 0 4px 0 3px;
    border: 1px solid #dcdcdc;
    border-radius: 3px;
    background: linear-gradient(#f8f8f8, #e6e6e6);
    color: #fff;
}

.gear {
    width: 12px;
    height: 12px;
}

/* Property grid */
.props {
    border-collapse: separate;
    border-spacing: 0;
    table-layout: fixed;
    width: 262px;
    white-space: nowrap;
}

.props th,
.props td {
    height: 19px;
    border-right: 1px solid #bdbdbd;
    border-bottom: 1px solid #bdbdbd;
    font-weight: 400;
    overflow: hidden;
}

.props tbody th {
    background: linear-gradient(90deg, #fcfcfc, #ececec);
    font-family: 'DejaVu Sans Mono', monospace;
    font-size: 10px;
}

.props thead th {
    height: 24px;
    background: linear-gradient(#fff, #f0f0f0);
}

.props .num {
    width: 22px;
}

.props .name {
    width: 121px;
}

.props thead .value {
    width: 87px;
    background: linear-gradient(#f9dba0, #efbe62);
}

.props .extra {
    width: 32px;
}

.props td:nth-child(2) {
    position: relative;
    padding-left: 19px;
}

.props td:nth-child(3) {
    padding-left: 2px;
}

.props td:last-child {
    text-align: center;
}

.props .link {
    color: #0000b4;
}

.props .group td {
    color: #808080;
}

.props .selected th {
    background: #ffd48c;
}

.props .selected td:nth-child(2) {
    background: #3399ff;
    color: #fff;
}

.props .selected td:nth-child(3) {
    background: #e0efff;
}

.props input {
    display: block;
    width: 13px;
    height: 13px;
    margin: 0 auto;
    appearance: none;
    border: 1px solid #8e8f8f;
    background: linear-gradient(135deg, #cfd2d6, #f6f6f6);
    box-shadow: inset 0 0 0 1px #f4f4f4;
}

.expand {
    position: absolute;
    left: 3px;
    top: 3px;
    width: 12px;
    height: 12px;
    border: 1px solid #a0a0a0;
    background:
        linear-gradient(#000, #000) center / 8px 1px no-repeat,
        linear-gradient(#000, #000) center / 1px 8px no-repeat,
        #e8e8e8;
}
```
